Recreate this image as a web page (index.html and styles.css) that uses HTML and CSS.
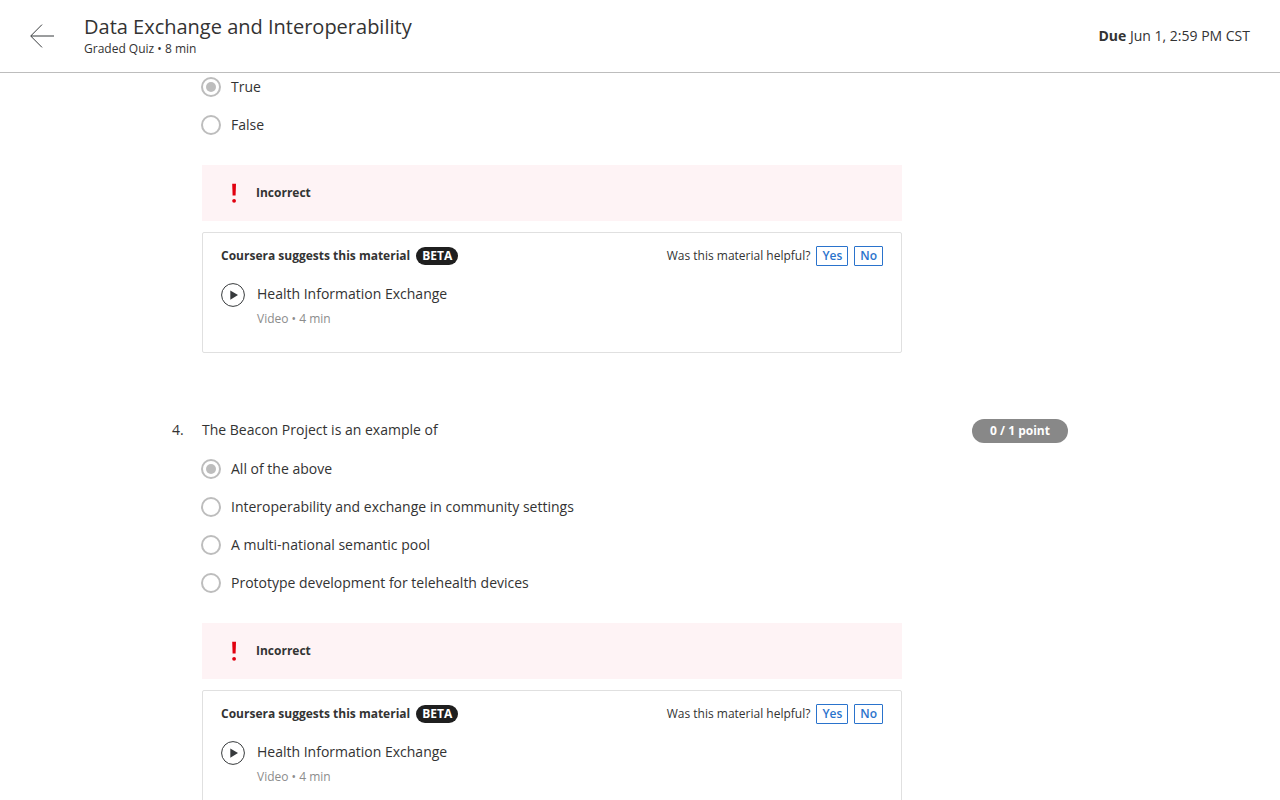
FILE: index.html
```html
<!DOCTYPE html>
<html lang="en">
<head>
<meta charset="utf-8">
<meta name="viewport" content="width=device-width, initial-scale=1">
<title>Data Exchange and Interoperability</title>
<link rel="stylesheet" href="styles.css">
</head>
<body>
<header class="topbar">
  <a class="back" href="#" aria-label="Back">
    <svg width="24" height="24" viewBox="0 0 24 24" fill="none" stroke="#373a3c" stroke-width="1"><path d="M24 12H1M12 .6L.7 12L12 23.400"/></svg>
  </a>
  <div class="heading">
    <h1 class="title">Data Exchange and Interoperability</h1>
    <p class="subtitle">Graded Quiz • 8 min</p>
  </div>
  <p class="due"><strong>Due</strong> Jun 1, 2:59 PM CST</p>
</header>

<main class="quiz">
  <section class="question">
    <div class="body">
      <div class="options" role="radiogroup" aria-label="Question 3">
        <label class="option"><input class="radio" type="radio" name="q3" checked disabled>True</label>
        <label class="option"><input class="radio" type="radio" name="q3" disabled>False</label>
      </div>
      <div class="alert">
        <svg class="alert-icon" width="6" height="20" viewBox="0 0 6 20" fill="#e1000f"><path d="M1.200 .8h3.800l-.4 11.700H1.600z"/><circle cx="3.100" cy="17.800" r="1.900"/></svg>
        <strong>Incorrect</strong>
      </div>
      <div class="card">
        <div class="card-head">
          <strong>Coursera suggests this material</strong>
          <span class="beta">BETA</span>
          <span class="ask">Was this material helpful?</span>
          <button class="vote" type="button">Yes</button>
          <button class="vote" type="button">No</button>
        </div>
        <a class="material" href="#">
          <svg class="play" width="24" height="24" viewBox="0 0 24 24"><circle cx="12" cy="12" r="11.400" fill="none" stroke="#373a3c"/><path d="M9.300 7.500L17 12L9.300 16.800z" fill="#373a3c"/></svg>
          <span class="material-text">
            <span class="material-title">Health Information Exchange</span>
            <span class="material-meta">Video • 4 min</span>
          </span>
        </a>
      </div>
    </div>
  </section>

  <section class="question">
    <span class="number">4.</span>
    <div class="body">
      <p class="prompt" id="q4-prompt">The Beacon Project is an example of</p>
      <div class="options" role="radiogroup" aria-labelledby="q4-prompt">
        <label class="option"><input class="radio" type="radio" name="q4" checked disabled>All of the above</label>
        <label class="option"><input class="radio" type="radio" name="q4" disabled>Interoperability and exchange in community settings</label>
        <label class="option"><input class="radio" type="radio" name="q4" disabled>A multi-national semantic pool</label>
        <label class="option"><input class="radio" type="radio" name="q4" disabled>Prototype development for telehealth devices</label>
      </div>
      <div class="alert">
        <svg class="alert-icon" width="6" height="20" viewBox="0 0 6 20" fill="#e1000f"><path d="M1.200 .8h3.800l-.4 11.700H1.600z"/><circle cx="3.100" cy="17.800" r="1.900"/></svg>
        <strong>Incorrect</strong>
      </div>
      <div class="card">
        <div class="card-head">
          <strong>Coursera suggests this material</strong>
          <span class="beta">BETA</span>
          <span class="ask">Was this material helpful?</span>
          <button class="vote" type="button">Yes</button>
          <button class="vote" type="button">No</button>
        </div>
        <a class="material" href="#">
          <svg class="play" width="24" height="24" viewBox="0 0 24 24"><circle cx="12" cy="12" r="11.400" fill="none" stroke="#373a3c"/><path d="M9.300 7.500L17 12L9.300 16.800z" fill="#373a3c"/></svg>
          <span class="material-text">
            <span class="material-title">Health Information Exchange</span>
            <span class="material-meta">Video • 4 min</span>
          </span>
        </a>
      </div>
    </div>
    <span class="points">0 / 1 point</span>
  </section>
</main>
</body>
</html>
```
FILE: styles.css
```css
* {
  box-sizing: border-box;
}

body {
  margin: 0;
  background: #fff;
  color: #333;
  font-family: "Open Sans", "Noto Sans", sans-serif;
  font-size: 14px;
  line-height: 20px;
}

h1,
p {
  margin: 0;
}

.topbar {
  position: sticky;
  top: 0;
  z-index: 1;
  display: flex;
  align-items: center;
  gap: 30px;
  min-height: 73px;
  padding: 0 30px;
  background: #fff;
  border-bottom: 1px solid #bdbdbd;
}

.back {
  display: flex;
}

.heading {
  flex: 1;
  padding-bottom: 2px;
}

.title {
  font-size: 20px;
  font-weight: 400;
  line-height: 28px;
}

.subtitle {
  font-size: 12px;
  line-height: 16px;
}

.quiz {
  max-width: 936px;
  margin: 0 auto;
  padding: 4px 40px 40px 0;
}

.question {
  display: grid;
  grid-template-columns: 30px minmax(0, 1fr) 166px;
  align-items: start;
  margin-bottom: 66px;
}

.body {
  grid-column: 2;
}

.number,
.prompt {
  line-height: 22px;
}

.prompt {
  margin-bottom: 18px;
}

.options {
  display: grid;
  gap: 18px;
  margin: 0 0 30px -1px;
}

.option {
  display: flex;
  align-items: center;
  gap: 10px;
}

.radio {
  appearance: none;
  flex: none;
  width: 20px;
  height: 20px;
  margin: 0;
  border: 2px solid #bdbdbd;
  border-radius: 50%;
  background: #fff;
}

.radio:checked {
  padding: 3px;
  background: #bdbdbd content-box;
}

.alert {
  display: flex;
  align-items: center;
  gap: 19px;
  min-height: 56px;
  margin-bottom: 11px;
  padding: 0 29px;
  background: #fef3f5;
  font-size: 12px;
}

.alert-icon {
  flex: none;
}

.card {
  padding: 13px 18px 21px;
  border: 1px solid #e0e0e0;
  border-radius: 2px;
}

.card-head {
  display: flex;
  align-items: center;
  gap: 6px;
  margin-bottom: 16px;
  font-size: 12px;
}

.beta {
  padding: 0 6px;
  border-radius: 9px;
  background: #1f1f1f;
  color: #fff;
  font-weight: 700;
  line-height: 18px;
}

.ask {
  margin-left: auto;
}

.vote {
  height: 20px;
  padding: 0 5px;
  border: 1px solid #2a73cc;
  border-radius: 1px;
  background: #fff;
  color: #2a73cc;
  font: 600 12px/18px "Open Sans", "Noto Sans", sans-serif;
}

.material {
  display: flex;
  gap: 12px;
  color: inherit;
  text-decoration: none;
}

.play {
  flex: none;
  margin-top: 1px;
}

.material-text {
  display: grid;
  gap: 1px;
  line-height: 24px;
}

.material-meta {
  color: #8c8c8c;
  font-size: 12px;
}

.points {
  justify-self: end;
  min-width: 96px;
  border-radius: 12px;
  background: #888;
  color: #fff;
  font-size: 12px;
  font-weight: 700;
  line-height: 24px;
  text-align: center;
}
```
